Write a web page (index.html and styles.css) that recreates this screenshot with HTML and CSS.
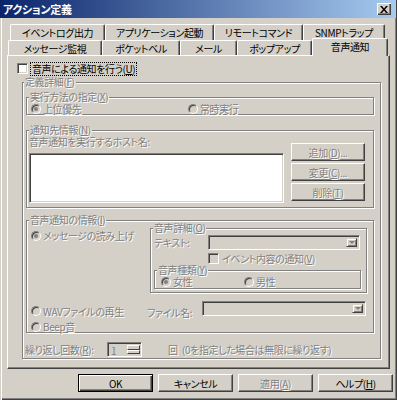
FILE: index.html
```html
<!DOCTYPE html>
<html lang="ja">
<head>
  <meta charset="UTF-8">
  <title>アクション定義</title>
  <link rel="stylesheet" href="styles.css">
</head>
<body>
  <div class="window">
    <div class="titlebar">
      <span class="title">アクション定義</span>
      <span class="close">
        <svg width="8" height="7" viewBox="0 0 8 7"><path d="M0 0h2l2 2.5L6 0h2L5 3.5 8 7H6L4 4.5 2 7H0l3-3.5z" fill="#000"/></svg>
      </span>
    </div>

    <div class="tabs">
      <div class="tabrow back">
        <div class="tab w95">イベントログ出力</div>
        <div class="tab w109">アプリケーション起動</div>
        <div class="tab w89">リモートコマンド</div>
        <div class="tab w82">SNMPトラップ</div>
      </div>
      <div class="tabrow front">
        <div class="tab w94">メッセージ監視</div>
        <div class="tab w78">ポケットベル</div>
        <div class="tab w57">メール</div>
        <div class="tab w75">ポップアップ</div>
        <div class="tab w76 selected">音声通知</div>
      </div>
    </div>

    <div class="page">
      <div class="enable-row">
        <span class="check on"></span>
        <span class="focus">音声による通知を行う(<u>U</u>)</span>
      </div>

      <div class="group outer">
        <div class="legend off">定義詳細(<u>F</u>)</div>

        <div class="group inner exec">
          <div class="legend off">実行方法の指定(<u>X</u>)</div>
          <div class="exec-row">
            <span class="opt w157"><span class="radio checked"></span><span class="off">上位優先</span></span>
            <span class="opt"><span class="radio"></span><span class="off">常時実行</span></span>
          </div>
        </div>

        <div class="group inner hosts">
          <div class="legend off">通知先情報(<u>N</u>)</div>
          <div class="host-row">
            <div class="host-left">
              <div class="off label12">音声通知を実行するホスト名:</div>
              <div class="listbox"></div>
            </div>
            <div class="host-buttons">
              <div class="btn off">追加(<u>D</u>)...</div>
              <div class="btn off">変更(<u>C</u>)...</div>
              <div class="btn off">削除(<u>T</u>)</div>
            </div>
          </div>
        </div>

        <div class="group inner voice">
          <div class="legend off">音声通知の情報(<u>I</u>)</div>
          <div class="voice-top">
            <div class="voice-left">
              <span class="opt"><span class="radio checked"></span><span class="off">メッセージの読み上げ</span></span>
            </div>
            <div class="group detail">
              <div class="legend off">音声詳細(<u>O</u>)</div>
              <div class="text-row">
                <span class="off text-label">テキスト:</span>
                <span class="combo w152"><span class="drop"></span></span>
              </div>
              <div class="event-row">
                <span class="check"></span>
                <span class="off">イベント内容の通知(<u>V</u>)</span>
              </div>
              <div class="group kind">
                <div class="legend off">音声種類(<u>Y</u>)</div>
                <div class="kind-row">
                  <span class="opt w83"><span class="radio checked"></span><span class="off">女性</span></span>
                  <span class="opt"><span class="radio"></span><span class="off">男性</span></span>
                </div>
              </div>
            </div>
          </div>
          <div class="wav-row">
            <span class="opt w116"><span class="radio"></span><span class="off">WAVファイルの再生</span></span>
            <span class="off file-label">ファイル名:</span>
            <span class="combo w164"><span class="drop"></span></span>
          </div>
          <div class="beep-row">
            <span class="opt"><span class="radio"></span><span class="off">Beep音</span></span>
          </div>
        </div>

        <div class="repeat-row">
          <span class="off repeat-label">繰り返し回数(<u>R</u>):</span>
          <span class="spin">
            <span class="spin-value">1</span>
            <span class="updown"><span class="ud"></span><span class="ud"></span></span>
          </span>
          <span class="off times">回</span>
          <span class="off">(0を指定した場合は無限に繰り返す)</span>
        </div>
      </div>
    </div>

    <div class="footer">
      <div class="btn big default">OK</div>
      <div class="btn big">キャンセル</div>
      <div class="btn big off">適用(<u>A</u>)</div>
      <div class="btn big">ヘルプ(<u>H</u>)</div>
    </div>
  </div>
</body>
</html>
```

FILE: styles.css
```css
* {
  box-sizing: border-box;
}
body {
  margin: 0;
  width: 397px;
  height: 400px;
  overflow: hidden;
  background: #d4d0c8;
  font-family: "Noto Sans CJK JP", "Liberation Sans", sans-serif;
  font-size: 10px;
  font-feature-settings: "palt";
  letter-spacing: -0.4px;
  color: #000;
}
u {
  text-decoration: underline;
}
.window {
  width: 397px;
  height: 400px;
  padding: 0 4px 4px 4px;
  box-shadow: inset 1px 0 0 #d4d0c8, inset 2px 0 0 #fff, inset -1px -1px 0 #404040, inset -2px -2px 0 #808080;
}

/* title bar */
.titlebar {
  height: 18px;
  margin: 0 -3px 0 -4px;
  padding: 0 5px 0 3px;
  display: flex;
  align-items: center;
  background: linear-gradient(to right, #0a246a, #a6caf0);
}
.title {
  color: #fff;
  font-weight: bold;
  font-size: 11px;
  letter-spacing: -0.3px;
}
.close {
  margin-left: auto;
  width: 14px;
  height: 12px;
  display: flex;
  align-items: center;
  justify-content: center;
  background: #d4d0c8;
  box-shadow: inset 1px 1px 0 #fff, inset -1px -1px 0 #404040, inset -2px -2px 0 #808080;
}

/* tabs */
.tabs {
  padding-top: 6px;
}
.tabrow {
  display: flex;
}
.tabrow.back {
  margin-left: 6px;
  height: 16px;
}
.tabrow.front {
  margin-left: 4px;
  height: 15px;
  align-items: flex-end;
}
.tab {
  height: 100%;
  text-align: center;
  line-height: 15px;
  white-space: nowrap;
  border-top: 1px solid #fff;
  border-left: 1px solid #fff;
  border-right: 1px solid #404040;
  border-radius: 2px 2px 0 0;
  box-shadow: inset -1px 0 0 #808080;
  background: #d4d0c8;
}
.tab.selected {
  height: 18px;
  margin-bottom: -1px;
  position: relative;
  z-index: 1;
  line-height: 15px;
}
.w57 { width: 57px; }
.w75 { width: 75px; }
.w76 { width: 76px; }
.w78 { width: 78px; }
.w82 { width: 82px; }
.w89 { width: 89px; }
.w94 { width: 94px; }
.w95 { width: 95px; }
.w109 { width: 109px; }

/* tab page */
.page {
  margin: 0 3px;
  height: 314px;
  border-top: 1px solid #fff;
  border-left: 1px solid #fff;
  border-right: 1px solid #404040;
  border-bottom: 1px solid #404040;
  box-shadow: inset -1px -1px 0 #808080;
  padding: 6px 0 0 9px;
}
.enable-row {
  height: 13px;
  display: flex;
  align-items: center;
  gap: 4px;
}
.focus {
  outline: 1px dotted #000;
  line-height: 12px;
  padding: 0 1px;
  margin-left: -1px;
}

/* disabled text */
.off {
  color: #808080;
  text-shadow: 1px 1px 0 #fff;
}
.label12 {
  height: 12px;
  line-height: 11px;
}

/* group boxes */
.group {
  border: 1px solid #808080;
  box-shadow: inset 1px 1px 0 #fff, 1px 1px 0 #fff;
}
.legend {
  display: table;
  height: 12px;
  line-height: 11px;
  margin: -7px 0 0 2px;
  padding: 0 1px;
  background: #d4d0c8;
  white-space: nowrap;
}
.outer {
  margin: 7px 0 0 5px;
  width: 359px;
  height: 277px;
}
.outer > .legend {
  margin-left: 1px;
}
.inner {
  margin-left: 3px;
  width: 348px;
}
.exec {
  margin-top: 9px;
  height: 18px;
}
.exec-row {
  height: 11px;
  display: flex;
  align-items: center;
  padding-left: 4px;
}
.hosts {
  margin-top: 15px;
  height: 78px;
}
.host-row {
  display: flex;
  padding-left: 2px;
}
.listbox {
  margin-top: 5px;
  width: 255px;
  height: 50px;
  background: #fff;
  border: 1px solid;
  border-color: #808080 #fff #fff #808080;
  box-shadow: inset 1px 1px 0 #404040, inset -1px -1px 0 #d4d0c8;
}
.host-buttons {
  margin: 7px 0 0 7px;
  display: flex;
  flex-direction: column;
  gap: 2px;
}
.host-buttons .btn {
  width: 74px;
  height: 18px;
}

/* option controls */
.opt {
  display: flex;
  align-items: center;
  gap: 2px;
  white-space: nowrap;
  line-height: 11px;
}
.w157 { width: 157px; }
.w83 { width: 83px; }
.w116 { width: 116px; }
.radio {
  width: 10px;
  height: 10px;
  border-radius: 50%;
  border: 1px solid;
  border-color: #808080 #fff #fff #808080;
  box-shadow: inset 1px 1px 0 #404040;
  background: #d4d0c8;
  display: flex;
  align-items: center;
  justify-content: center;
  flex: none;
}
.radio.checked::after {
  content: "";
  width: 4px;
  height: 4px;
  border-radius: 50%;
  background: #808080;
}
.check {
  width: 11px;
  height: 11px;
  flex: none;
  border: 1px solid;
  border-color: #808080 #fff #fff #808080;
  box-shadow: inset 1px 1px 0 #404040, inset -1px -1px 0 #d4d0c8;
  background: #d4d0c8;
}
.check.on {
  background: #fff;
}

/* buttons */
.btn {
  display: flex;
  align-items: center;
  justify-content: center;
  background: #d4d0c8;
  border: 1px solid;
  border-color: #fff #404040 #404040 #fff;
  box-shadow: inset -1px -1px 0 #808080;
  white-space: nowrap;
}

/* voice info */
.voice {
  margin-top: 12px;
  height: 113px;
}
.voice-top {
  display: flex;
}
.voice-left {
  width: 123px;
  padding: 4px 0 0 4px;
}
.detail {
  margin-top: 2px;
  width: 217px;
  height: 65px;
}
.text-row {
  margin-top: 1px;
  height: 15px;
  display: flex;
  align-items: center;
  padding-left: 3px;
}
.text-label {
  width: 54px;
}
.combo {
  height: 15px;
  display: flex;
  justify-content: flex-end;
  align-items: stretch;
  padding: 2px;
  background: #d4d0c8;
  border: 1px solid;
  border-color: #808080 #fff #fff #808080;
  box-shadow: inset 1px 1px 0 #404040, inset -1px -1px 0 #d4d0c8;
}
.w152 { width: 152px; }
.w164 { width: 164px; }
.drop {
  width: 11px;
  background: #d4d0c8;
  border: 1px solid;
  border-color: #d4d0c8 #404040 #404040 #d4d0c8;
  box-shadow: inset 1px 1px 0 #fff, inset -1px -1px 0 #808080;
  display: flex;
  align-items: center;
  justify-content: center;
}
.drop::after {
  content: "";
  border-left: 3px solid transparent;
  border-right: 3px solid transparent;
  border-top: 3px solid #808080;
}
.event-row {
  margin: 3px 0 0 57px;
  height: 11px;
  display: flex;
  align-items: center;
  gap: 3px;
  line-height: 11px;
}
.kind {
  margin: 6px 0 0 3px;
  width: 207px;
  height: 19px;
}
.kind-row {
  height: 11px;
  display: flex;
  align-items: center;
  padding-left: 6px;
}
.wav-row {
  margin-top: 8px;
  height: 15px;
  display: flex;
  align-items: flex-end;
  padding-left: 4px;
}
.wav-row .opt,
.file-label {
  height: 12px;
  margin-bottom: -1px;
}
.file-label {
  width: 55px;
}
.beep-row {
  margin-top: 5px;
  height: 11px;
  display: flex;
  align-items: center;
  padding-left: 4px;
}

/* repeat */
.repeat-row {
  margin: 9px 0 0 2px;
  height: 15px;
  display: flex;
  align-items: center;
}
.repeat-label {
  width: 82px;
}
.spin {
  width: 35px;
  height: 15px;
  display: flex;
  justify-content: space-between;
  padding: 2px 1px 2px 3px;
  border: 1px solid;
  border-color: #808080 #fff #fff #808080;
  box-shadow: inset 1px 1px 0 #404040, inset -1px -1px 0 #d4d0c8;
}
.spin-value {
  color: #808080;
  line-height: 11px;
}
.updown {
  width: 13px;
  display: flex;
  flex-direction: column;
}
.ud {
  flex: 1;
  border: 1px solid;
  border-color: #fff #404040 #404040 #fff;
}
.times {
  margin-left: 26px;
  width: 14px;
}

/* footer buttons */
.footer {
  margin-top: 5px;
  display: flex;
  justify-content: flex-end;
  gap: 5px;
}
.btn.big {
  width: 75px;
  height: 18px;
}
.btn.default {
  border-color: #000;
  box-shadow: inset 1px 1px 0 #fff, inset -1px -1px 0 #404040, inset -2px -2px 0 #808080;
}
```
